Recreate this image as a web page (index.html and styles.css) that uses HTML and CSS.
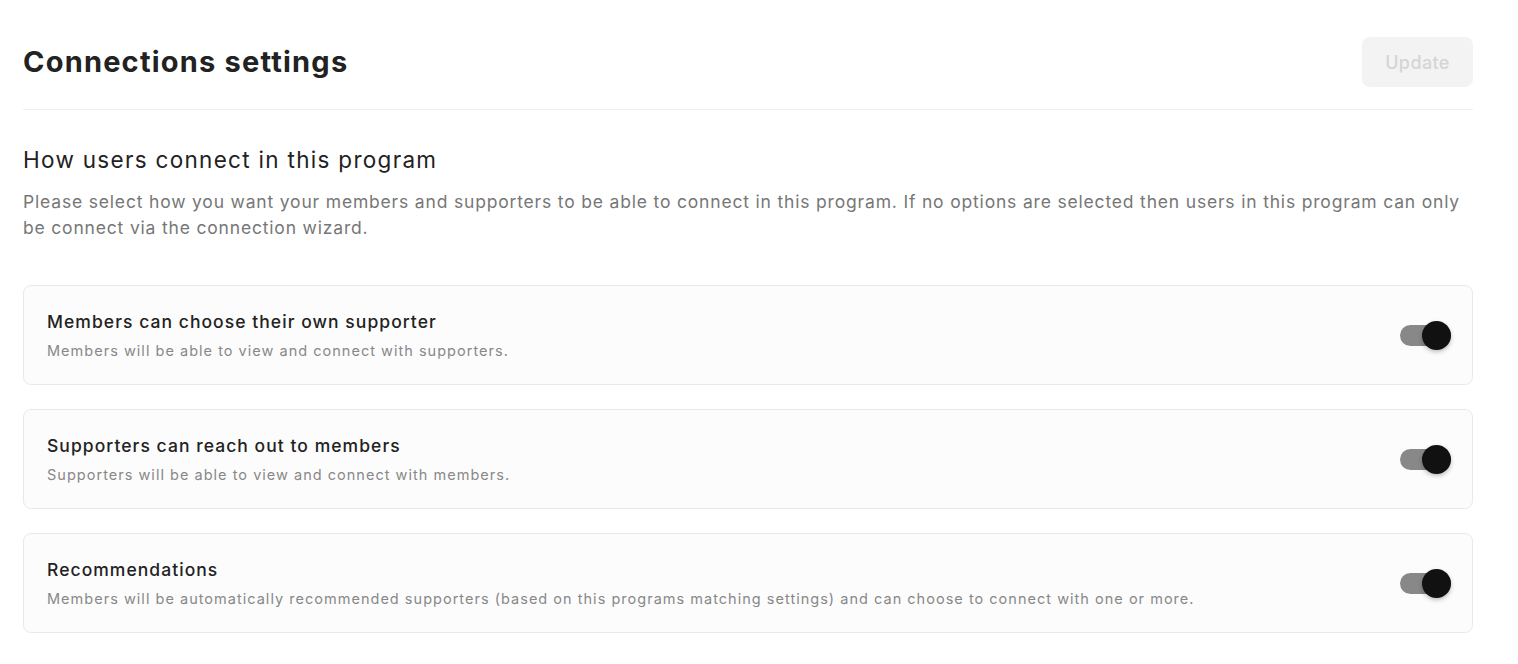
FILE: index.html
```html
<!DOCTYPE html>
<html>
<head>
<meta charset="utf-8">
<link rel="stylesheet" href="styles.css">
</head>
<body>
<div class="page">
  <header class="header">
    <h1 class="title">Connections settings</h1>
    <button class="update" disabled>Update</button>
  </header>
  <section class="section">
    <h2 class="section-title">How users connect in this program</h2>
    <p class="section-desc">Please select how you want your members and supporters to be able to connect in this program. If no options are selected then users in this program can only be connect via the connection wizard.</p>
    <div class="cards">
      <div class="card">
        <div class="card-text">
          <div class="card-title">Members can choose their own supporter</div>
          <div class="card-desc">Members will be able to view and connect with supporters.</div>
        </div>
        <div class="toggle"><span class="knob"></span></div>
      </div>
      <div class="card">
        <div class="card-text">
          <div class="card-title">Supporters can reach out to members</div>
          <div class="card-desc">Supporters will be able to view and connect with members.</div>
        </div>
        <div class="toggle"><span class="knob"></span></div>
      </div>
      <div class="card">
        <div class="card-text">
          <div class="card-title">Recommendations</div>
          <div class="card-desc">Members will be automatically recommended supporters (based on this programs matching settings) and can choose to connect with one or more.</div>
        </div>
        <div class="toggle"><span class="knob"></span></div>
      </div>
    </div>
  </section>
</div>
</body>
</html>
```

FILE: styles.css
```css
* { box-sizing: border-box; }
html, body { margin: 0; padding: 0; background: #fff; }
body {
  font-family: Inter, "Noto Sans", Roboto, sans-serif;
  color: #222;
}
.page {
  padding: 37px 45px 0 23px;
}
.header {
  display: flex;
  align-items: center;
  justify-content: space-between;
  height: 50px;
}
.title {
  margin: 0;
  font-size: 29px;
  font-weight: 700;
  color: #222;
  letter-spacing: 1.2px;
  line-height: 36px;
}
.update {
  width: 111px;
  height: 50px;
  border: none;
  border-radius: 8px;
  background: #f3f3f3;
  color: #d5d5d5;
  font-family: inherit;
  font-size: 18px;
  font-weight: 500;
  letter-spacing: 0.4px;
}
.section {
  margin-top: 22px;
  border-top: 1px solid #efefef;
  padding-top: 35px;
}
.section-title {
  margin: 0;
  font-size: 22.5px;
  font-weight: 400;
  color: #222;
  line-height: 30px;
  letter-spacing: 1.3px;
}
.section-desc {
  margin: 14px 0 0;
  font-size: 17.5px;
  line-height: 26px;
  color: #777;
  letter-spacing: 0.82px;
}
.cards {
  margin-top: 44px;
  display: flex;
  flex-direction: column;
  gap: 24px;
}
.card {
  height: 100px;
  border: 1px solid #e9e9e9;
  border-radius: 8px;
  background: #fcfcfc;
  display: flex;
  align-items: center;
  justify-content: space-between;
  padding: 0 21px 0 23px;
}
.card-title {
  font-size: 17.5px;
  font-weight: 500;
  color: #222;
  line-height: 24px;
  letter-spacing: 1.05px;
}
.card-desc {
  margin-top: 7px;
  font-size: 14.5px;
  color: #888;
  line-height: 20px;
  letter-spacing: 1.02px;
}
.toggle {
  position: relative;
  width: 51px;
  height: 21px;
  border-radius: 11px;
  background: #888;
  flex: none;
}
.knob {
  position: absolute;
  right: 0;
  top: -4px;
  width: 29px;
  height: 29px;
  border-radius: 50%;
  background: #111;
  box-shadow: 0 2px 4px rgba(0,0,0,0.25);
}
```
